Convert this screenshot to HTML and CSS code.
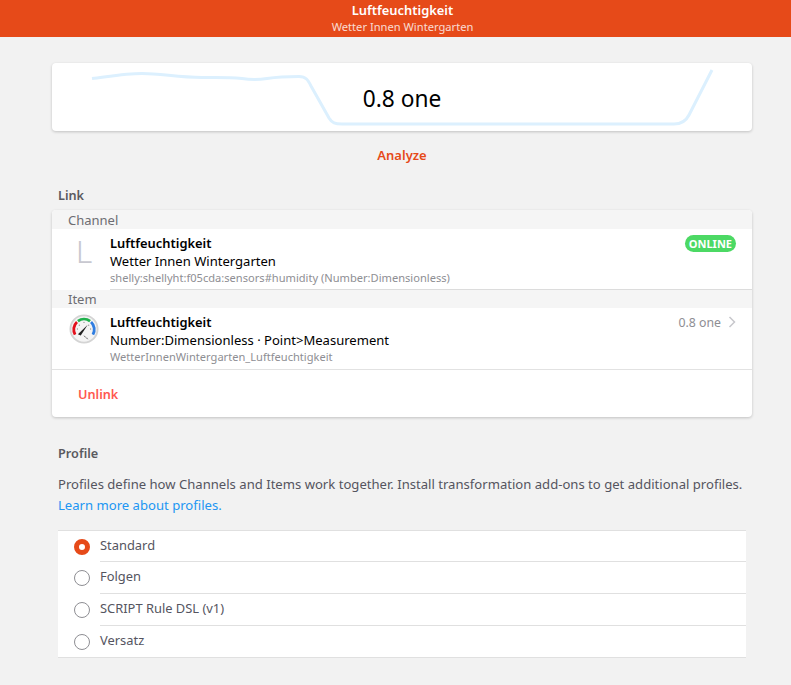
FILE: index.html

```html
<!DOCTYPE html>
<html lang="en">
<head>
  <meta charset="UTF-8" />
  <title>Luftfeuchtigkeit</title>
  <link rel="stylesheet" href="styles.css">
</head>
<body>
  <header class="navbar">
    <div class="nav-title">Luftfeuchtigkeit</div>
    <div class="nav-subtitle">Wetter Innen Wintergarten</div>
  </header>

  <main class="page">
    <section class="card state-card">
      <svg class="sparkline" viewBox="0 0 700 68" width="700" height="68">
        <path d="M40 15.5 C60 13 75 10.5 90 10.5 C110 10.5 125 14.5 150 14.5 C165 14.5 175 14 190 15.5 C200 17 205 17 215 15.5 C225 14 235 13.5 247 13.5 C254 13.5 256 17 259 23 L277 55 C280 60 283 61 290 61 L622 61 C630 61 634 58 637 52 L660 7" />
      </svg>
      <div class="state-value">0.8 one</div>
    </section>

    <a class="analyze">Analyze</a>

    <h2 class="block-title link-title">Link</h2>
    <section class="card link-card">
      <div class="divider-label">Channel</div>
      <div class="row">
        <div class="row-media"><span class="channel-letter">L</span></div>
        <div class="row-inner">
          <div class="row-top">
            <div class="row-title">Luftfeuchtigkeit</div>
            <span class="badge">ONLINE</span>
          </div>
          <div class="row-sub">Wetter Innen Wintergarten</div>
          <div class="row-foot">shelly:shellyht:f05cda:sensors#humidity (Number:Dimensionless)</div>
        </div>
      </div>
      <div class="divider-label item-label">Item</div>
      <div class="row item-row">
        <div class="row-media">
          <svg class="gauge" viewBox="0 0 32 32" width="30" height="30">
            <circle cx="16" cy="16" r="14.5" fill="#f4f4f4" stroke="#d4d4d4" stroke-width="2" />
            <path d="M6.5 22 A11 11 0 0 1 8.5 8.5" fill="none" stroke="#e3101c" stroke-width="3" />
            <path d="M9.5 7.5 A11 11 0 0 1 22.5 7.5" fill="none" stroke="#1fb14c" stroke-width="3" />
            <path d="M23.5 8.5 A11 11 0 0 1 25.5 22" fill="none" stroke="#2f7de0" stroke-width="3" />
            <path d="M9.5 21.5 L20 11.5 L12.5 23 Z" fill="#222" />
            <circle cx="16" cy="9" r=".7" fill="#999" />
            <circle cx="21" cy="12" r=".7" fill="#999" />
            <circle cx="23" cy="16" r=".7" fill="#999" />
            <circle cx="11" cy="12" r=".7" fill="#999" />
            <circle cx="9" cy="16" r=".7" fill="#999" />
            <path d="M16 23 L20 27 M16 24 H17 M19 26 H20" stroke="#888" stroke-width="1" fill="none" />
          </svg>
        </div>
        <div class="row-inner">
          <div class="row-top">
            <div class="row-title">Luftfeuchtigkeit</div>
            <div class="row-after">
              <span>0.8 one</span>
              <svg class="chevron" viewBox="0 0 8 12" width="8" height="12"><path d="M1.5 1 L6.5 6 L1.5 11" /></svg>
            </div>
          </div>
          <div class="row-sub">Number:Dimensionless · Point&gt;Measurement</div>
          <div class="row-foot">WetterInnenWintergarten_Luftfeuchtigkeit</div>
        </div>
      </div>
      <div class="unlink-row"><a class="unlink">Unlink</a></div>
    </section>

    <h2 class="block-title profile-title">Profile</h2>
    <p class="profile-text">Profiles define how Channels and Items work together. Install transformation add-ons to get additional profiles. <a class="learn">Learn more about profiles.</a></p>

    <ul class="radio-list">
      <li class="radio-item"><span class="radio checked"></span><span class="radio-label">Standard</span></li>
      <li class="radio-item"><span class="radio"></span><span class="radio-label">Folgen</span></li>
      <li class="radio-item"><span class="radio"></span><span class="radio-label">SCRIPT Rule DSL (v1)</span></li>
      <li class="radio-item"><span class="radio"></span><span class="radio-label">Versatz</span></li>
    </ul>
  </main>
</body>
</html>
```

FILE: styles.css

```css
* {
  box-sizing: border-box;
  margin: 0;
  padding: 0;
}

html, body {
  height: 100%;
  overflow: hidden;
  background: #f2f2f2;
  font-family: "Noto Sans", "Open Sans", sans-serif;
  font-size: 13px;
  color: #000;
}

.navbar {
  height: 37px;
  background: #e64a19;
  color: #fff;
  text-align: center;
  padding: 2px 0 0 14px;
}

.nav-title {
  font-size: 12.9px;
  font-weight: 600;
  line-height: 17px;
}

.nav-subtitle {
  font-size: 11.15px;
  line-height: 15px;
  opacity: 0.8;
}

.page {
  padding: 26px 39px 0 52px;
}

.card {
  background: #fff;
  border-radius: 4px;
  box-shadow: 0 1px 3px rgba(0, 0, 0, 0.2);
}

.state-card {
  position: relative;
  height: 68px;
  display: flex;
  align-items: center;
  justify-content: center;
}

.sparkline {
  position: absolute;
  left: 0;
  top: 0;
}

.sparkline path {
  fill: none;
  stroke: #dcf0fe;
  stroke-width: 3;
}

.state-value {
  position: relative;
  font-size: 22.7px;
  line-height: 28px;
  padding-top: 4px;
}

.analyze {
  display: block;
  text-align: center;
  color: #e64a19;
  font-weight: 600;
  font-size: 13px;
  line-height: 18px;
  margin-top: 15px;
}

.block-title {
  font-size: 12.7px;
  font-weight: 600;
  color: #5a5a5f;
  line-height: 18px;
  padding-left: 6px;
}

.link-title {
  margin-top: 22px;
  margin-bottom: 6px;
}

.link-card {
  overflow: hidden;
}

.divider-label {
  height: 19px;
  background: #f5f5f5;
  color: #6d6d72;
  font-size: 13px;
  line-height: 20px;
  padding-left: 16px;
}

.item-label {
  height: 18px;
  line-height: 18px;
}

.row {
  display: flex;
}

.item-row {
  height: 62px;
  border-bottom: 1px solid #e2e2e2;
}

.row-media {
  width: 58px;
  flex: none;
  display: flex;
  justify-content: center;
  padding: 6px 0 0 6px;
}

.channel-letter {
  font-size: 32px;
  line-height: 36px;
  margin-top: -2px;
  font-weight: 300;
  color: #c8c8d0;
}

.row-inner {
  flex: 1;
  padding: 5px 16px 0 0;
  height: 61px;
  border-bottom: 1px solid #dcdcdc;
}

.item-row .row-inner {
  border-bottom: none;
}

.row-top {
  display: flex;
  justify-content: space-between;
  align-items: center;
  height: 18px;
}

.row-title {
  font-size: 12.9px;
  font-weight: 600;
  line-height: 18px;
}

.row-sub {
  font-size: 13.05px;
  line-height: 18px;
}

.row-foot {
  font-size: 11.1px;
  line-height: 16px;
  color: #8e8e93;
}

.badge {
  background: #4cd964;
  color: #fff;
  font-size: 11px;
  font-weight: 700;
  line-height: 17px;
  height: 17px;
  border-radius: 9px;
  padding: 0 4px;
}

.row-after {
  display: flex;
  align-items: center;
  gap: 7px;
  color: #8e8e93;
  font-size: 12.3px;
}

.chevron path {
  fill: none;
  stroke: #c7c7cc;
  stroke-width: 1.5;
}

.unlink-row {
  height: 47px;
  padding-left: 26px;
  display: flex;
  align-items: center;
}

.unlink {
  color: #ff3b30;
  opacity: 0.85;
  font-weight: 600;
  font-size: 12.7px;
}

.profile-title {
  margin-top: 27px;
}

.profile-text {
  margin-top: 12px;
  padding-left: 6px;
  color: #55555f;
  font-size: 13.1px;
  line-height: 21px;
}

.learn {
  color: #2196f3;
}

.radio-list {
  list-style: none;
  margin: 14px 6px 0;
  background: #fff;
  border-top: 1px solid #e0e0e0;
  border-bottom: 1px solid #e0e0e0;
}

.radio-item {
  height: 32px;
  display: flex;
  align-items: center;
  padding-left: 16px;
  gap: 10px;
}

.radio-item:first-child,
.radio-item:last-child {
  height: 31px;
}

.radio {
  width: 16px;
  height: 16px;
  flex: none;
  border-radius: 50%;
  border: 1px solid #8e8e93;
}

.radio.checked {
  border: 5px solid #e64a19;
}

.radio-label {
  flex: 1;
  height: 100%;
  line-height: 29px;
  font-size: 12.9px;
  color: #55555f;
  border-bottom: 1px solid #e0e0e0;
}

.radio-item:last-child .radio-label {
  border-bottom: none;
}
```
